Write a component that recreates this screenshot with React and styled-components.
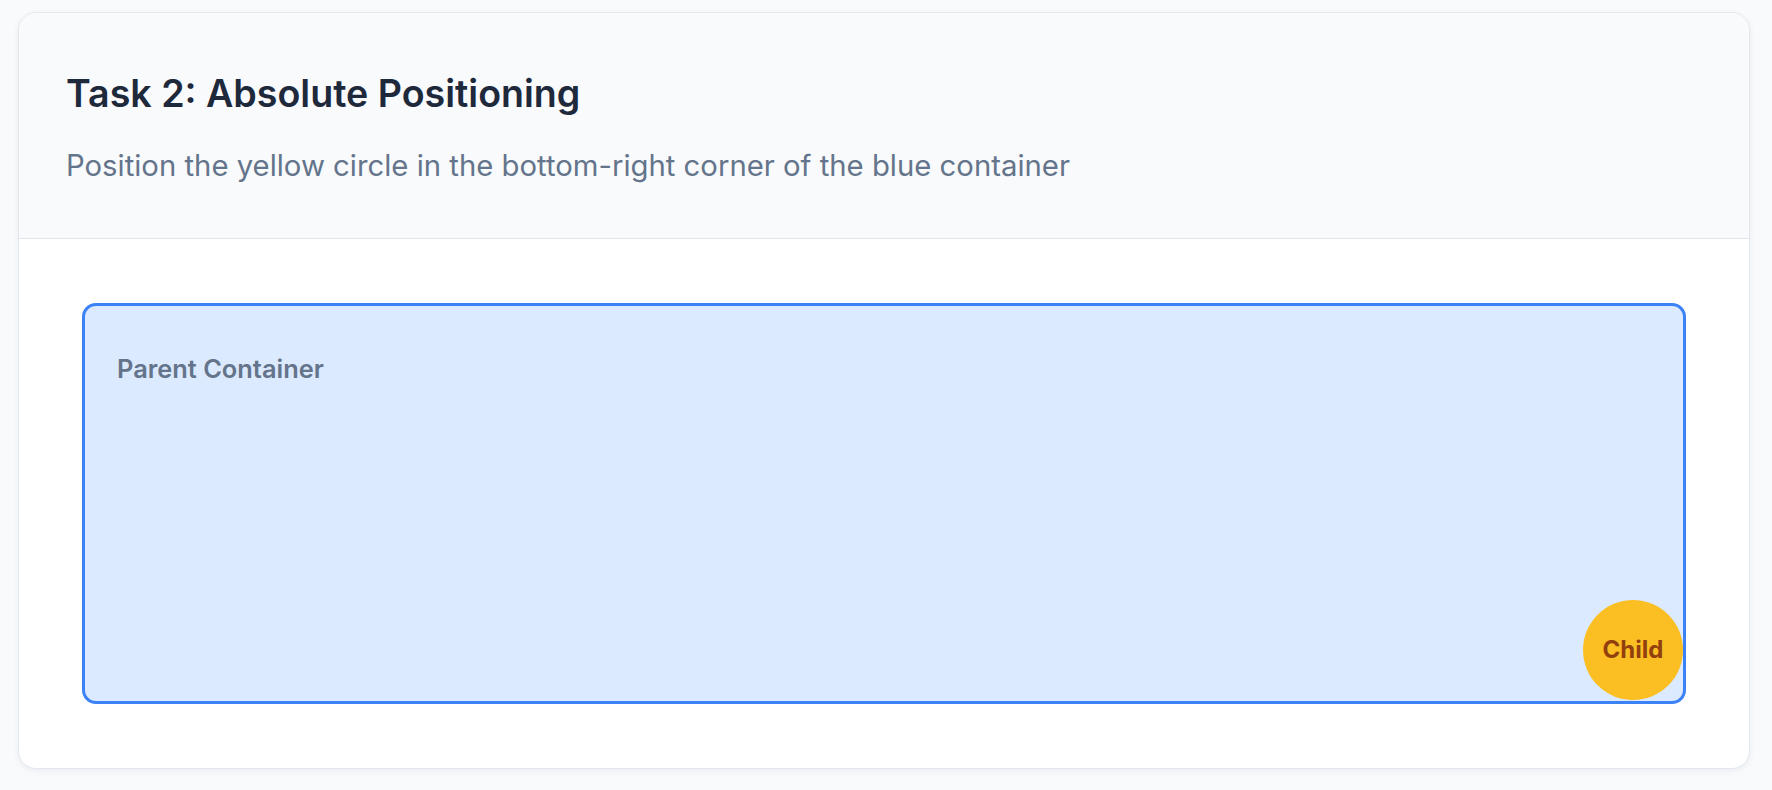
import styled, { createGlobalStyle } from "styled-components";

const GlobalStyle = createGlobalStyle`
  html, body {
    margin: 0;
    padding: 0;
    background: #f8fafc;
  }
  body {
    font-family: Inter, "Noto Sans", "Liberation Sans", sans-serif;
    -webkit-font-smoothing: antialiased;
  }
`;

const Page = styled.div`
  padding: 12px 22px 20px 18px;
`;

const Card = styled.section`
  background: #ffffff;
  border: 1px solid #e2e8f0;
  border-radius: 18px;
  box-shadow: 0 2px 6px rgba(15, 23, 42, 0.06);
  overflow: hidden;
`;

const Header = styled.header`
  background: #f8fafc;
  border-bottom: 1px solid #e2e8f0;
  padding: 58px 47px 50px;
`;

const Title = styled.h2`
  margin: 0 0 29px;
  font-size: 37.6px;
  line-height: 1.2;
  font-weight: 600;
  color: #1e293b;
`;

const Subtitle = styled.p`
  margin: 0;
  font-size: 29.3px;
  line-height: 1.45;
  color: #64748b;
`;

const Body = styled.div`
  padding: 64px 63px 64px;
`;

const Parent = styled.div`
  position: relative;
  box-sizing: border-box;
  height: 401px;
  padding: 44px 32px 40px;
  background: #dbeafe;
  border: 3px solid #3b82f6;
  border-radius: 14px;
`;

const Label = styled.span`
  display: block;
  font-size: 25.4px;
  line-height: 1.5;
  font-weight: 600;
  color: #64748b;
`;

const Child = styled.div`
  position: absolute;
  right: 0;
  bottom: 1px;
  width: 100px;
  height: 100px;
  border-radius: 50%;
  background: #fbbf24;
  color: #92400e;
  font-size: 24px;
  font-weight: 700;
  display: flex;
  align-items: center;
  justify-content: center;
`;

export default function App() {
  return (
    <Page>
      <GlobalStyle />
      <Card>
        <Header>
          <Title>Task 2: Absolute Positioning</Title>
          <Subtitle>
            Position the yellow circle in the bottom-right corner of the blue
            container
          </Subtitle>
        </Header>
        <Body>
          <Parent>
            <Label>Parent Container</Label>
            <Child>Child</Child>
          </Parent>
        </Body>
      </Card>
    </Page>
  );
}
